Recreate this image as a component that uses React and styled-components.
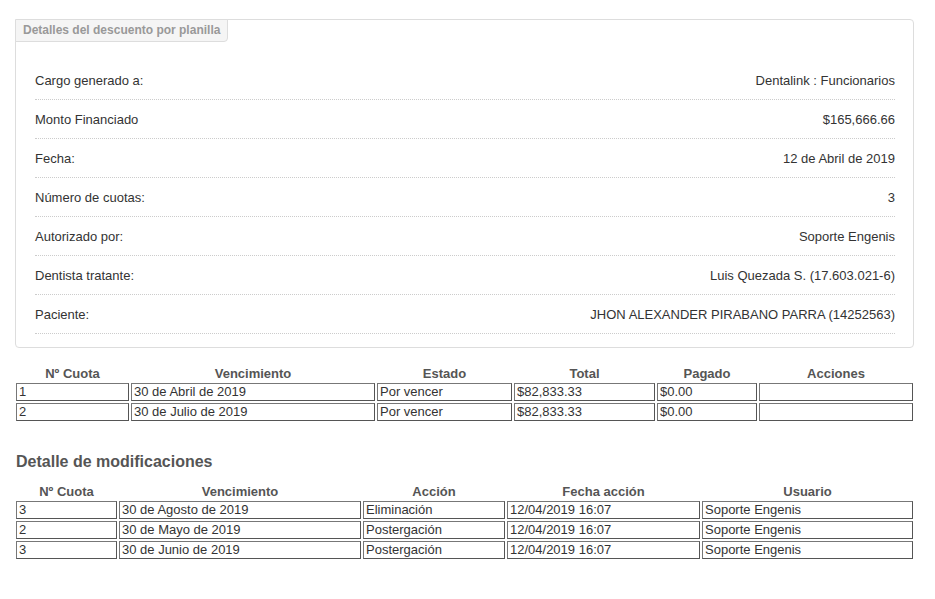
import React from "react";
import styled, { createGlobalStyle } from "styled-components";

const G = createGlobalStyle`
  body { margin: 0; font-family: "Liberation Sans", Arial, sans-serif; font-size: 13px; color: #333; background: #fff; }
`;
const Page = styled.div`padding: 19px 21px 0 15px;`;
const Panel = styled.div`
  border: 1px solid #ddd; border-radius: 4px; padding: 0 18px 0 19px;
`;
const Tab = styled.div`
  display: inline-block; margin-left: -20px; margin-top: -1px;
  background: #f5f5f5; border: 1px solid #ddd; border-radius: 0 0 4px 0;
  padding: 3px 7px 4px; font-size: 12px; font-weight: bold; color: #999;
`;
const List = styled.div`padding: 19px 0 13px;`;
const Row = styled.div`
  display: flex; justify-content: space-between; align-items: center;
  border-bottom: 1px dotted #ccc;
  padding-top: 1px; box-sizing: border-box; height: 39px;
`;
const Gap = styled.div`height: 16px;`;
const Table = styled.table`
  width: calc(100% + 2px); margin-left: -1px; border-spacing: 2px; font-size: 13px; color: #333;
  th { font-weight: bold; color: #555; padding: 1px 0 0; height: 14px; line-height: 14px; }
  td { border: 1px solid #555; border-top-color: #777; border-left-color: #777; padding: 0 2px; height: 16px; line-height: 16px; }
`;
const H = styled.h3`font-size: 16px; color: #555; margin: 30px 0 11px 1px; font-weight: bold;`;

const details = [
  ["Cargo generado a:", "Dentalink : Funcionarios"],
  ["Monto Financiado", "$165,666.66"],
  ["Fecha:", "12 de Abril de 2019"],
  ["Número de cuotas:", "3"],
  ["Autorizado por:", "Soporte Engenis"],
  ["Dentista tratante:", "Luis Quezada S. (17.603.021-6)"],
  ["Paciente:", "JHON ALEXANDER PIRABANO PARRA (14252563)"],
];

export default function App() {
  return (
    <Page>
      <G />
      <Panel>
        <Tab>Detalles del descuento por planilla</Tab>
        <List>
          {details.map(([a, b]) => <Row key={a}><span>{a}</span><span>{b}</span></Row>)}
        </List>
      </Panel>
      <Gap />
      <Table>
        <colgroup><col width="113" /><col width="244" /><col width="135" /><col width="141" /><col width="100" /><col /></colgroup>
        <thead><tr><th>Nº Cuota</th><th>Vencimiento</th><th>Estado</th><th>Total</th><th>Pagado</th><th>Acciones</th></tr></thead>
        <tbody>
          <tr><td>1</td><td>30 de Abril de 2019</td><td>Por vencer</td><td>$82,833.33</td><td>$0.00</td><td></td></tr>
          <tr><td>2</td><td>30 de Julio de 2019</td><td>Por vencer</td><td>$82,833.33</td><td>$0.00</td><td></td></tr>
        </tbody>
      </Table>
      <H>Detalle de modificaciones</H>
      <Table>
        <colgroup><col width="101" /><col width="242" /><col width="142" /><col width="193" /><col /></colgroup>
        <thead><tr><th>Nº Cuota</th><th>Vencimiento</th><th>Acción</th><th>Fecha acción</th><th>Usuario</th></tr></thead>
        <tbody>
          <tr><td>3</td><td>30 de Agosto de 2019</td><td>Eliminación</td><td>12/04/2019 16:07</td><td>Soporte Engenis</td></tr>
          <tr><td>2</td><td>30 de Mayo de 2019</td><td>Postergación</td><td>12/04/2019 16:07</td><td>Soporte Engenis</td></tr>
          <tr><td>3</td><td>30 de Junio de 2019</td><td>Postergación</td><td>12/04/2019 16:07</td><td>Soporte Engenis</td></tr>
        </tbody>
      </Table>
    </Page>
  );
}
